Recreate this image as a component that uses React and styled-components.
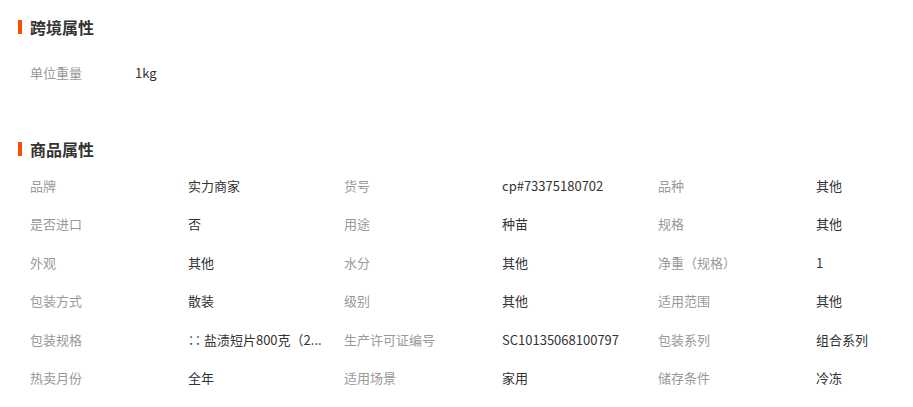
import React from "react";
import styled, { createGlobalStyle } from "styled-components";

const Global = createGlobalStyle`
  html, body { margin: 0; padding: 0; background: #fff; }
  body { font-family: "Noto Sans CJK SC", "Noto Sans", sans-serif; color: #333; }
`;

const Page = styled.div`
  width: 913px;
  padding: 19px 0 0 18px;
  box-sizing: border-box;
  overflow: hidden;
`;

const Section = styled.section`
  margin-bottom: ${(p) => p.$gap || 0}px;
`;

const Title = styled.h3`
  margin: 0 0 ${(p) => p.$after}px 0;
  display: flex;
  align-items: center;
  gap: 8px;
  height: 16px;
  font-size: 16px;
  line-height: 16px;
  font-weight: 700;
  color: #333;
  &::before {
    content: "";
    width: 4px;
    height: 14px;
    background: #ff4d00;
  }
`;

const Grid = styled.div`
  display: grid;
  grid-template-columns: ${(p) => p.$cols};
  grid-auto-rows: ${(p) => p.$row}px;
  padding-left: 12px;
`;

const Label = styled.div`
  display: flex;
  align-items: center;
  font-size: 13px;
  color: #999;
  white-space: nowrap;
`;

const Value = styled.div`
  display: flex;
  align-items: center;
  min-width: 0;
  font-size: 13px;
  color: #333;
  white-space: nowrap;
`;

const cross = [["单位重量", "1kg"]];

const attrs = [
  ["品牌", "实力商家"], ["货号", "cp#73375180702"], ["品种", "其他"],
  ["是否进口", "否"], ["用途", "种苗"], ["规格", "其他"],
  ["外观", "其他"], ["水分", "其他"], ["净重（规格）", "1"],
  ["包装方式", "散装"], ["级别", "其他"], ["适用范围", "其他"],
  ["包装规格", "∷ 盐渍短片800克（2..."], ["生产许可证编号", "SC10135068100797"], ["包装系列", "组合系列"],
  ["热卖月份", "全年"], ["适用场景", "家用"], ["储存条件", "冷冻"],
];

function Pairs({ items }) {
  return items.map(([k, v]) => (
    <React.Fragment key={k}>
      <Label>{k}</Label>
      <Value>{v}</Value>
    </React.Fragment>
  ));
}

export default function App() {
  return (
    <>
      <Global />
      <Page>
        <Section $gap={50}>
          <Title $after={18}>跨境属性</Title>
          <Grid $cols="105px 200px" $row={38}>
            <Pairs items={cross} />
          </Grid>
        </Section>
        <Section>
          <Title $after={9}>商品属性</Title>
          <Grid $cols="158px 156px 158px 156px 158px 1fr" $row={38.5}>
            <Pairs items={attrs} />
          </Grid>
        </Section>
      </Page>
    </>
  );
}
